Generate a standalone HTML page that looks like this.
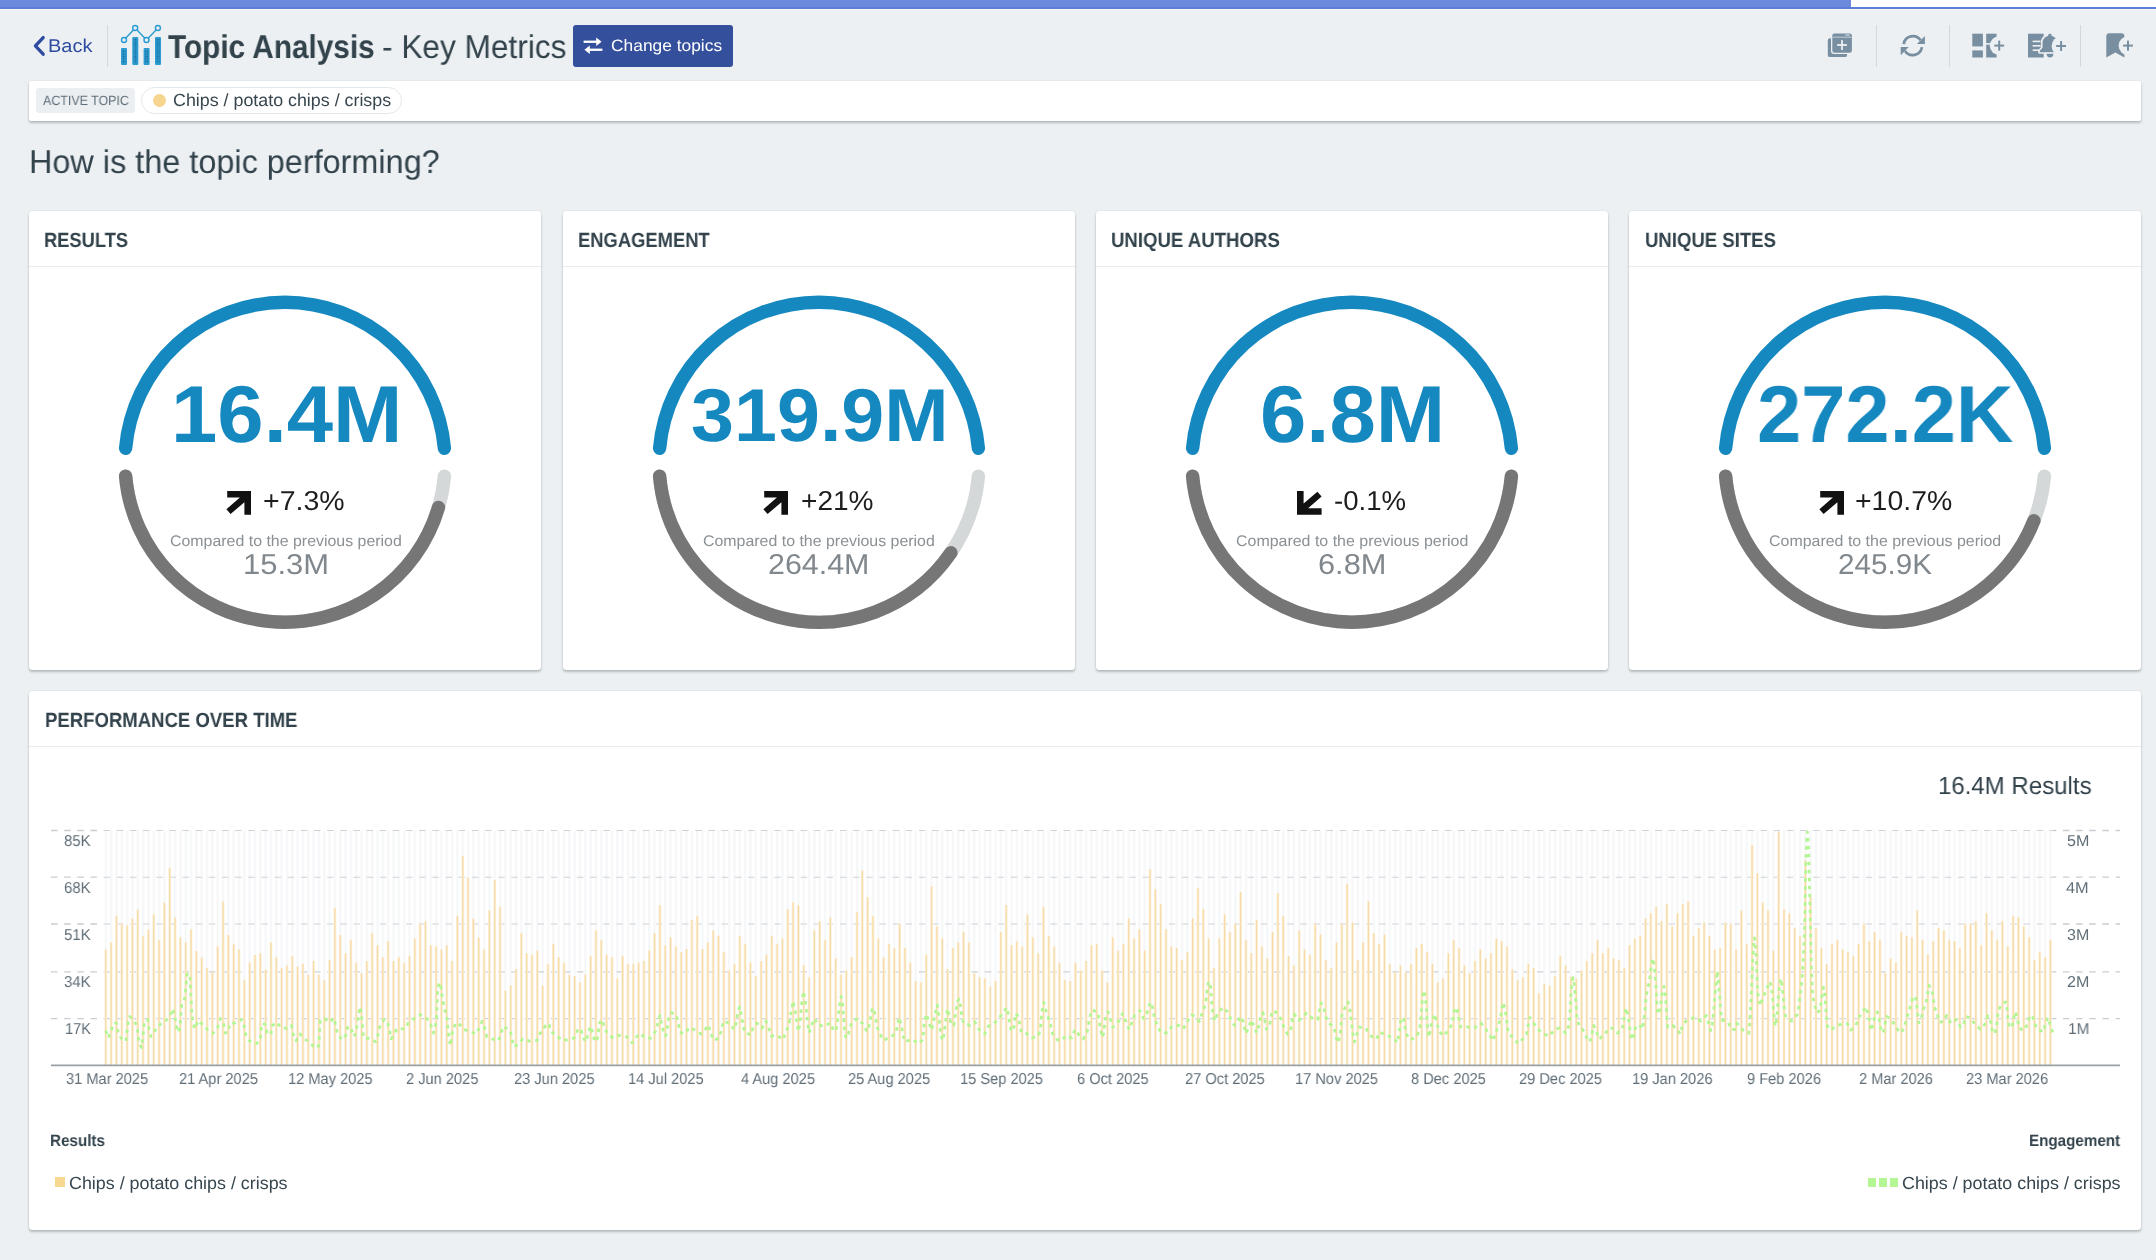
<!DOCTYPE html>
<html><head><meta charset="utf-8"><title>Topic Analysis - Key Metrics</title>
<style>
html,body{margin:0;padding:0}
body{width:2156px;height:1260px;overflow:hidden;background:#ecf0f3;position:relative;font-family:"Liberation Sans", sans-serif}
.abs{position:absolute;display:block}
.t{position:absolute;white-space:nowrap;transform-origin:0 50%;line-height:normal;display:block;will-change:transform;text-rendering:geometricPrecision}
.card{position:absolute;background:#fff;border-radius:3.5px;box-shadow:0 2px 2.5px rgba(40,50,50,.27),0 0 1.5px rgba(40,50,50,.14)}
.hline{position:absolute;height:1.6px;background:#e6ebee}
.vsep{position:absolute;width:1.4px;background:#d3d8dc}
#topbar{position:absolute;left:0;top:0;width:1851px;height:7px;background:#6c8adc}
#topbar-w{position:absolute;left:1851px;top:0;width:305px;height:7px;background:#fff}
#topline{position:absolute;left:0;top:7px;width:2156px;height:2px;background:#5b7eda}
#topline2{position:absolute;left:0;top:9px;width:2156px;height:1px;background:#f4f5f3}
</style></head><body>
<div id="topbar"></div><div id="topbar-w"></div><div id="topline"></div><div id="topline2"></div>
<svg class="abs" style="left:30px;top:34px" width="18" height="24" viewBox="0 0 18 24"><path d="M13.2 3.6 5.4 11.9 13.2 20.2" fill="none" stroke="#2f4b9f" stroke-width="3.3" stroke-linecap="round" stroke-linejoin="round"/></svg>
<span class="t" style="left:48.36px;top:35.31px;font-size:18.54px;font-weight:400;color:#2f4b9f;transform:scaleX(1.0778)">Back</span>
<div class="vsep" style="left:107px;top:25px;height:42px"></div>
<svg class="abs" style="left:118px;top:22px" width="48" height="46" viewBox="118 22 48 46"><defs><pattern id="dots" width="2.4" height="2.4" patternUnits="userSpaceOnUse"><rect width="2.4" height="2.4" fill="#2a9bd0"/><circle cx="1.2" cy="1.2" r="0.85" fill="#1a6a98"/></pattern></defs><rect x="121" y="48" width="6" height="17" rx="1" fill="#2a9bd0"/><rect x="122.4" y="50" width="3.2" height="13" fill="url(#dots)"/><rect x="132.3" y="37" width="6" height="28" rx="1" fill="#2a9bd0"/><rect x="133.70000000000002" y="39" width="3.2" height="24" fill="url(#dots)"/><rect x="143.6" y="48" width="6" height="17" rx="1" fill="#2a9bd0"/><rect x="145.0" y="50" width="3.2" height="13" fill="url(#dots)"/><rect x="155" y="37" width="6" height="28" rx="1" fill="#2a9bd0"/><rect x="156.4" y="39" width="3.2" height="24" fill="url(#dots)"/><path d="M124 40 L135.2 28 L146.5 40 L157.9 28" fill="none" stroke="#2a9bd0" stroke-width="1.4"/><circle cx="124" cy="40" r="2.5" fill="#ecf0f3" stroke="#2a9bd0" stroke-width="1.4"/><circle cx="135.2" cy="28" r="2.5" fill="#ecf0f3" stroke="#2a9bd0" stroke-width="1.4"/><circle cx="146.5" cy="40" r="2.5" fill="#ecf0f3" stroke="#2a9bd0" stroke-width="1.4"/><circle cx="157.9" cy="28" r="2.5" fill="#ecf0f3" stroke="#2a9bd0" stroke-width="1.4"/></svg>
<span class="t" style="left:167.95px;top:27.72px;font-size:32.96px;font-weight:700;color:#33434c;transform:scaleX(0.9030)">Topic Analysis</span>
<span class="t" style="left:381.78px;top:28.42px;font-size:32.96px;font-weight:400;color:#33434c;transform:scaleX(0.9595)">- Key Metrics</span>
<div class="abs" style="left:573px;top:25px;width:160px;height:42px;background:#344f9c;border-radius:3px"></div>
<svg class="abs" style="left:582px;top:37px" width="22" height="18" viewBox="0 0 22 18"><g fill="#fff"><rect x="1.6" y="3.6" width="14" height="2.3"/><path d="M14.2 0.6 19.6 4.75 14.2 8.9z"/><rect x="6.4" y="11.6" width="14" height="2.3"/><path d="M7.8 8.6 2.4 12.75 7.8 16.9z"/></g></svg>
<span class="t" style="left:611.07px;top:36.61px;font-size:16.48px;font-weight:400;color:#fff;transform:scaleX(1.0551)">Change topics</span>
<svg class="abs" style="left:1820px;top:26px" width="320" height="40" viewBox="1820 26 320 40"><rect x="1827.8" y="38.2" width="19.3" height="18.9" rx="2.2" fill="#788fa1"/><rect x="1831" y="32.1" width="22.2" height="21.9" rx="3" fill="#ecf0f3"/><rect x="1832.3" y="33.4" width="19.6" height="19.3" rx="2.2" fill="#788fa1"/><rect x="1832.6" y="36.7" width="19" height="0.9" fill="#ecf0f3" opacity=".75"/><rect x="1845.2" y="34.4" width="4.6" height="1.3" fill="#ecf0f3" opacity=".7"/><rect x="1837.1" y="44.1" width="9.8" height="1.8" fill="#ecf0f3"/><rect x="1841.1" y="40.1" width="1.8" height="9.9" fill="#ecf0f3"/><path d="M1903.7 44.1A9.3 9.3 0 0 1 1920.6 40.2" fill="none" stroke="#788fa1" stroke-width="2.7"/><path d="M1924.9 36V44.1H1916.9z" fill="#788fa1"/><path d="M1921.9 47.1A9.3 9.3 0 0 1 1905 51" fill="none" stroke="#788fa1" stroke-width="2.7"/><path d="M1900.7 55.2V47.1H1908.7z" fill="#788fa1"/><defs><mask id="m3"><rect x="1960" y="20" width="60" height="50" fill="#fff"/><circle cx="1999.2" cy="45.6" r="9.4" fill="#000"/></mask><mask id="m4"><rect x="2020" y="20" width="60" height="50" fill="#fff"/><circle cx="2061" cy="46" r="9.4" fill="#000"/></mask><mask id="m5"><rect x="2100" y="20" width="40" height="50" fill="#fff"/><circle cx="2128" cy="45.6" r="9.4" fill="#000"/></mask></defs><g fill="#788fa1" mask="url(#m3)"><rect x="1972.3" y="33.7" width="10.6" height="12.7"/><rect x="1972.3" y="50.4" width="10.6" height="7.1"/><rect x="1986.2" y="33.7" width="10.4" height="9.4"/><rect x="1986.2" y="44.7" width="10.4" height="12.8"/></g><rect x="1994.3" y="44.6" width="9.8" height="2" fill="#788fa1"/><rect x="1998.2" y="40.6" width="2" height="10" fill="#788fa1"/><g mask="url(#m4)"><rect x="2028" y="33.7" width="15.7" height="23.8" fill="#788fa1"/><rect x="2032.6" y="40.6" width="8" height="1.6" fill="#ecf0f3"/><rect x="2032.6" y="45" width="8" height="1.6" fill="#ecf0f3"/><rect x="2032.6" y="49.4" width="8" height="1.6" fill="#ecf0f3"/><g transform="translate(2049.9 33.7) scale(1.05 .954)"><path d="M0 0c1 0 1.7.7 1.7 1.7v.6c3.2.8 5.3 3.6 5.3 7.1v5.3l2.6 3.3v1.4h-19.2v-1.4l2.6-3.3v-5.3c0-3.5 2.100-6.300 5.300-7.100v-.6c0-1 .7-1.700 1.700-1.700z" fill="#ecf0f3" stroke="#ecf0f3" stroke-width="3.2" stroke-linejoin="round"/><path d="M0 0c1 0 1.7.7 1.7 1.7v.6c3.2.8 5.3 3.6 5.3 7.1v5.3l2.6 3.3v1.4h-19.2v-1.4l2.6-3.3v-5.3c0-3.5 2.100-6.300 5.300-7.100v-.6c0-1 .7-1.700 1.700-1.700z" fill="#788fa1"/></g><path d="M2046.6 53.6h6.8a3.4 3.4 0 0 1-6.8 0z" fill="#ecf0f3" stroke="#ecf0f3" stroke-width="2.4"/><path d="M2046.6 53.8h6.8a3.4 3.6 0 0 1-6.8 0z" fill="#788fa1"/></g><rect x="2056.2" y="45" width="9.8" height="2" fill="#788fa1"/><rect x="2060.1" y="41" width="2" height="10" fill="#788fa1"/><path mask="url(#m5)" d="M2109.3 33.2h12.1a3 3 0 0 1 3 3V57.6l-9.05-5-9.05 5V36.2a3 3 0 0 1 3-3z" fill="#788fa1"/><rect x="2123.1" y="44.6" width="9.8" height="2" fill="#788fa1"/><rect x="2127" y="40.6" width="2" height="10" fill="#788fa1"/></svg>
<div class="vsep" style="left:1876px;top:25px;height:42px"></div>
<div class="vsep" style="left:1949px;top:25px;height:42px"></div>
<div class="vsep" style="left:2080px;top:25px;height:42px"></div>
<div class="card" style="left:29px;top:81px;width:2112px;height:40px;border-radius:2px"></div>
<div class="abs" style="left:36px;top:88px;width:99px;height:25px;background:#eceff2;border-radius:3px"></div>
<span class="t" style="left:42.56px;top:93.06px;font-size:13.39px;font-weight:400;color:#5f6f7a;transform:scaleX(0.9294)">ACTIVE TOPIC</span>
<div class="abs" style="left:141px;top:87px;width:261px;height:27px;box-sizing:border-box;border:1.5px solid #e3e8ec;border-radius:14px;background:#fff"></div>
<div class="abs" style="left:153px;top:94px;width:13px;height:13px;border-radius:50%;background:#f6d58e"></div>
<span class="t" style="left:172.64px;top:90.16px;font-size:17.51px;font-weight:400;color:#36454e;transform:scaleX(1.0194)">Chips / potato chips / crisps</span>
<span class="t" style="left:28.54px;top:143.12px;font-size:32.96px;font-weight:400;color:#33434c;transform:scaleX(0.9835)">How is the topic performing?</span>
<div class="card" style="left:29px;top:211px;width:512px;height:459px"></div>
<div class="hline" style="left:29px;top:265.5px;width:512px"></div>
<span class="t" style="left:44.27px;top:228.91px;font-size:20.6px;font-weight:700;color:#33434c;transform:scaleX(0.8890)">RESULTS</span>
<svg class="abs" style="left:29px;top:270px" width="512" height="390" viewBox="29 270 512 390"><path d="M125.61 448.26A160 160 0 0 1 444.39 448.26" fill="none" stroke="#1588c0" stroke-width="13.4" stroke-linecap="round"/><path d="M444.39 476.14A160 160 0 0 1 125.61 476.14" fill="none" stroke="#d5d8d9" stroke-width="13.4" stroke-linecap="round"/><path d="M438.49 507.38A160 160 0 0 1 125.61 476.14" fill="none" stroke="#767676" stroke-width="13.4" stroke-linecap="round"/></svg>
<span class="t" style="left:170.83px;top:368.66px;font-size:80.55px;font-weight:700;color:#1588c0;transform:scaleX(1.0340)">16.4M</span>
<svg class="abs" style="left:226.2px;top:490.5px" width="25" height="24" viewBox="0 0 25 24"><path d="M1.2 0H25V23.8H18.4V11.2L4.6 23 0.4 18.2 13.9 6.6H1.2z" fill="#111"/></svg>
<span class="t" style="left:262.88px;top:485.05px;font-size:27.4px;font-weight:400;color:#1d1d1d;transform:scaleX(1.0398)">+7.3%</span>
<span class="t" style="left:169.74px;top:532.76px;font-size:15.45px;font-weight:400;color:#8a9094;transform:scaleX(1.0311)">Compared to the previous period</span>
<span class="t" style="left:242.81px;top:548.62px;font-size:28.84px;font-weight:400;color:#81888d;transform:scaleX(1.0740)">15.3M</span>
<div class="card" style="left:563px;top:211px;width:512px;height:459px"></div>
<div class="hline" style="left:563px;top:265.5px;width:512px"></div>
<span class="t" style="left:578.46px;top:228.91px;font-size:20.6px;font-weight:700;color:#33434c;transform:scaleX(0.8920)">ENGAGEMENT</span>
<svg class="abs" style="left:563px;top:270px" width="512" height="390" viewBox="563 270 512 390"><path d="M659.61 448.26A160 160 0 0 1 978.39 448.26" fill="none" stroke="#1588c0" stroke-width="13.4" stroke-linecap="round"/><path d="M978.39 476.14A160 160 0 0 1 659.61 476.14" fill="none" stroke="#d5d8d9" stroke-width="13.4" stroke-linecap="round"/><path d="M950.87 552.81A160 160 0 0 1 659.61 476.14" fill="none" stroke="#767676" stroke-width="13.4" stroke-linecap="round"/></svg>
<span class="t" style="left:690.52px;top:372.08px;font-size:74.78px;font-weight:700;color:#1588c0;transform:scaleX(1.0332)">319.9M</span>
<svg class="abs" style="left:763.4px;top:490.5px" width="25" height="24" viewBox="0 0 25 24"><path d="M1.2 0H25V23.8H18.4V11.2L4.6 23 0.4 18.2 13.9 6.6H1.2z" fill="#111"/></svg>
<span class="t" style="left:800.51px;top:485.05px;font-size:27.4px;font-weight:400;color:#1d1d1d;transform:scaleX(1.0240)">+21%</span>
<span class="t" style="left:702.54px;top:532.76px;font-size:15.45px;font-weight:400;color:#8a9094;transform:scaleX(1.0311)">Compared to the previous period</span>
<span class="t" style="left:767.96px;top:548.62px;font-size:28.84px;font-weight:400;color:#81888d;transform:scaleX(1.0549)">264.4M</span>
<div class="card" style="left:1096px;top:211px;width:512px;height:459px"></div>
<div class="hline" style="left:1096px;top:265.5px;width:512px"></div>
<span class="t" style="left:1111.37px;top:228.91px;font-size:20.6px;font-weight:700;color:#33434c;transform:scaleX(0.9032)">UNIQUE AUTHORS</span>
<svg class="abs" style="left:1096px;top:270px" width="512" height="390" viewBox="1096 270 512 390"><path d="M1192.61 448.26A160 160 0 0 1 1511.39 448.26" fill="none" stroke="#1588c0" stroke-width="13.4" stroke-linecap="round"/><path d="M1511.39 476.14A160 160 0 0 1 1192.61 476.14" fill="none" stroke="#d5d8d9" stroke-width="13.4" stroke-linecap="round"/><path d="M1511.39 476.14A160 160 0 0 1 1192.61 476.14" fill="none" stroke="#767676" stroke-width="13.4" stroke-linecap="round"/></svg>
<span class="t" style="left:1259.90px;top:368.66px;font-size:80.55px;font-weight:700;color:#1588c0;transform:scaleX(1.0346)">6.8M</span>
<svg class="abs" style="left:1296.8px;top:490.5px" width="25" height="24" viewBox="0 0 25 24"><path d="M0 0H6.6V12.6L20.4 0.8 24.6 5.6 11.1 17.2H24.6V23.8H0z" fill="#111"/></svg>
<span class="t" style="left:1333.65px;top:485.05px;font-size:27.4px;font-weight:400;color:#1d1d1d;transform:scaleX(1.0082)">-0.1%</span>
<span class="t" style="left:1235.94px;top:532.76px;font-size:15.45px;font-weight:400;color:#8a9094;transform:scaleX(1.0334)">Compared to the previous period</span>
<span class="t" style="left:1317.99px;top:548.62px;font-size:28.84px;font-weight:400;color:#81888d;transform:scaleX(1.0677)">6.8M</span>
<div class="card" style="left:1629px;top:211px;width:512px;height:459px"></div>
<div class="hline" style="left:1629px;top:265.5px;width:512px"></div>
<span class="t" style="left:1644.77px;top:228.91px;font-size:20.6px;font-weight:700;color:#33434c;transform:scaleX(0.9013)">UNIQUE SITES</span>
<svg class="abs" style="left:1629px;top:270px" width="512" height="390" viewBox="1629 270 512 390"><path d="M1725.61 448.26A160 160 0 0 1 2044.39 448.26" fill="none" stroke="#1588c0" stroke-width="13.4" stroke-linecap="round"/><path d="M2044.39 476.14A160 160 0 0 1 1725.61 476.14" fill="none" stroke="#d5d8d9" stroke-width="13.4" stroke-linecap="round"/><path d="M2033.94 520.65A160 160 0 0 1 1725.61 476.14" fill="none" stroke="#767676" stroke-width="13.4" stroke-linecap="round"/></svg>
<span class="t" style="left:1757.44px;top:368.66px;font-size:80.55px;font-weight:700;color:#1588c0;transform:scaleX(0.9870)">272.2K</span>
<svg class="abs" style="left:1818.7px;top:490.5px" width="25" height="24" viewBox="0 0 25 24"><path d="M1.2 0H25V23.8H18.4V11.2L4.6 23 0.4 18.2 13.9 6.6H1.2z" fill="#111"/></svg>
<span class="t" style="left:1854.99px;top:485.05px;font-size:27.4px;font-weight:400;color:#1d1d1d;transform:scaleX(1.0382)">+10.7%</span>
<span class="t" style="left:1769.44px;top:532.76px;font-size:15.45px;font-weight:400;color:#8a9094;transform:scaleX(1.0329)">Compared to the previous period</span>
<span class="t" style="left:1838.40px;top:548.62px;font-size:28.84px;font-weight:400;color:#81888d;transform:scaleX(1.0286)">245.9K</span>
<div class="card" style="left:29px;top:691px;width:2112px;height:539px"></div>
<div class="hline" style="left:29px;top:745.5px;width:2112px"></div>
<span class="t" style="left:44.65px;top:708.71px;font-size:20.6px;font-weight:700;color:#33434c;transform:scaleX(0.9006)">PERFORMANCE OVER TIME</span>
<svg class="abs" style="left:40px;top:820px" width="2090" height="250" viewBox="40 820 2090 250"><defs><pattern id="vb" x="104.650" y="0" width="5.3277" height="10" patternUnits="userSpaceOnUse"><rect x="0" y="0" width="2.30" height="10" fill="#f6f7f9"/></pattern></defs><rect x="104.65" y="830.5" width="1946.91" height="234.9" fill="url(#vb)"/><defs><clipPath id="cin"><rect x="103.1" y="820" width="1949.9" height="250"/></clipPath><clipPath id="cout"><rect x="40" y="820" width="63.1" height="250"/><rect x="2053.1" y="820" width="100" height="250"/></clipPath></defs><path clip-path="url(#cin)" d="M51 830.5H2120M51 877.2H2120M51 924.0H2120M51 971.8H2120M51 1018.6H2120" stroke="#cfd2d6" stroke-width="1.15" stroke-dasharray="6.5 6.65" fill="none"/><path clip-path="url(#cout)" d="M51 830.5H2120M51 877.2H2120M51 924.0H2120M51 971.8H2120M51 1018.6H2120" stroke="#c9cdd1" stroke-width="1.3" stroke-dasharray="6.5 6.65" fill="none"/><path d="M105.80 1065.4V949.4M111.13 1065.4V942.6M116.46 1065.4V916.0M121.78 1065.4V923.8M127.11 1065.4V925.5M132.44 1065.4V918.5M137.77 1065.4V909.4M143.09 1065.4V936.2M148.42 1065.4V929.4M153.75 1065.4V914.4M159.08 1065.4V940.1M164.40 1065.4V902.8M169.73 1065.4V867.8M175.06 1065.4V917.4M180.39 1065.4V937.4M185.72 1065.4V942.6M191.04 1065.4V929.4M196.37 1065.4V951.0M201.70 1065.4V957.6M207.03 1065.4V967.9M212.35 1065.4V972.2M217.68 1065.4V946.5M223.01 1065.4V901.2M228.34 1065.4V934.9M233.66 1065.4V944.2M238.99 1065.4V949.4M244.32 1065.4V980.0M249.65 1065.4V962.5M254.98 1065.4V954.9M260.30 1065.4V953.3M265.63 1065.4V969.5M270.96 1065.4V942.6M276.29 1065.4V957.2M281.61 1065.4V968.3M286.94 1065.4V965.4M292.27 1065.4V955.9M297.60 1065.4V966.5M302.92 1065.4V963.8M308.25 1065.4V974.7M313.58 1065.4V961.1M318.91 1065.4V974.7M324.24 1065.4V980.0M329.56 1065.4V960.1M334.89 1065.4V908.0M340.22 1065.4V934.9M345.55 1065.4V953.3M350.87 1065.4V939.7M356.20 1065.4V962.7M361.53 1065.4V973.2M366.86 1065.4V961.1M372.19 1065.4V933.3M377.51 1065.4V945.2M382.84 1065.4V957.2M388.17 1065.4V941.3M393.50 1065.4V961.1M398.82 1065.4V957.2M404.15 1065.4V962.7M409.48 1065.4V955.9M414.81 1065.4V938.5M420.13 1065.4V923.8M425.46 1065.4V921.2M430.79 1065.4V945.2M436.12 1065.4V946.5M441.45 1065.4V949.4M446.77 1065.4V945.2M452.10 1065.4V961.1M457.43 1065.4V916.0M462.76 1065.4V855.7M468.08 1065.4V877.5M473.41 1065.4V918.7M478.74 1065.4V937.4M484.07 1065.4V949.4M489.39 1065.4V910.5M494.72 1065.4V880.0M500.05 1065.4V906.7M505.38 1065.4V990.7M510.71 1065.4V985.4M516.03 1065.4V968.9M521.36 1065.4V933.3M526.69 1065.4V953.3M532.02 1065.4V954.7M537.34 1065.4V950.8M542.67 1065.4V985.4M548.00 1065.4V964.0M553.33 1065.4V944.0M558.65 1065.4V957.2M563.98 1065.4V962.7M569.31 1065.4V974.7M574.64 1065.4V975.9M579.97 1065.4V982.5M585.29 1065.4V974.7M590.62 1065.4V955.9M595.95 1065.4V930.6M601.28 1065.4V940.1M606.60 1065.4V954.7M611.93 1065.4V957.2M617.26 1065.4V978.6M622.59 1065.4V956.2M627.91 1065.4V964.0M633.24 1065.4V964.0M638.57 1065.4V962.7M643.90 1065.4V961.1M649.23 1065.4V950.4M654.55 1065.4V933.3M659.88 1065.4V905.3M665.21 1065.4V945.2M670.54 1065.4V937.2M675.86 1065.4V946.5M681.19 1065.4V952.0M686.52 1065.4V949.0M691.85 1065.4V919.9M697.17 1065.4V916.0M702.50 1065.4V949.0M707.83 1065.4V942.6M713.16 1065.4V930.6M718.49 1065.4V935.8M723.81 1065.4V952.0M729.14 1065.4V970.4M734.47 1065.4V964.0M739.80 1065.4V935.8M745.12 1065.4V944.0M750.45 1065.4V962.7M755.78 1065.4V975.9M761.11 1065.4V961.1M766.43 1065.4V954.7M771.76 1065.4V935.8M777.09 1065.4V944.0M782.42 1065.4V938.5M787.75 1065.4V909.2M793.07 1065.4V902.6M798.40 1065.4V905.3M803.73 1065.4V965.0M809.06 1065.4V977.2M814.38 1065.4V930.6M819.71 1065.4V921.2M825.04 1065.4V940.1M830.37 1065.4V917.4M835.69 1065.4V958.6M841.02 1065.4V974.7M846.35 1065.4V970.4M851.68 1065.4V957.2M857.01 1065.4V911.9M862.33 1065.4V870.5M867.66 1065.4V897.3M872.99 1065.4V916.0M878.32 1065.4V938.5M883.64 1065.4V957.2M888.97 1065.4V944.0M894.30 1065.4V947.9M899.63 1065.4V923.8M904.95 1065.4V947.9M910.28 1065.4V962.7M915.61 1065.4V981.1M920.94 1065.4V982.5M926.27 1065.4V954.7M931.59 1065.4V886.4M936.92 1065.4V926.5M942.25 1065.4V938.5M947.58 1065.4V969.3M952.90 1065.4V947.9M958.23 1065.4V942.6M963.56 1065.4V931.9M968.89 1065.4V942.6M974.22 1065.4V973.2M979.54 1065.4V977.2M984.87 1065.4V978.6M990.20 1065.4V986.4M995.53 1065.4V981.1M1000.85 1065.4V931.9M1006.18 1065.4V905.1M1011.51 1065.4V945.2M1016.84 1065.4V941.3M1022.16 1065.4V946.5M1027.49 1065.4V914.4M1032.82 1065.4V937.2M1038.15 1065.4V953.3M1043.48 1065.4V906.7M1048.80 1065.4V935.8M1054.13 1065.4V946.5M1059.46 1065.4V962.7M1064.79 1065.4V980.0M1070.11 1065.4V981.1M1075.44 1065.4V962.7M1080.77 1065.4V970.4M1086.10 1065.4V961.1M1091.42 1065.4V945.2M1096.75 1065.4V944.0M1102.08 1065.4V970.4M1107.41 1065.4V982.5M1112.74 1065.4V937.2M1118.06 1065.4V950.8M1123.39 1065.4V944.0M1128.72 1065.4V918.5M1134.05 1065.4V938.5M1139.37 1065.4V929.2M1144.70 1065.4V950.4M1150.03 1065.4V869.3M1155.36 1065.4V889.2M1160.68 1065.4V903.9M1166.01 1065.4V929.2M1171.34 1065.4V946.5M1176.67 1065.4V947.9M1182.00 1065.4V960.1M1187.32 1065.4V952.0M1192.65 1065.4V918.5M1197.98 1065.4V887.8M1203.31 1065.4V909.2M1208.63 1065.4V938.5M1213.96 1065.4V967.9M1219.29 1065.4V938.5M1224.62 1065.4V914.4M1229.94 1065.4V931.9M1235.27 1065.4V923.8M1240.60 1065.4V891.9M1245.93 1065.4V940.1M1251.26 1065.4V953.3M1256.58 1065.4V919.9M1261.91 1065.4V946.5M1267.24 1065.4V958.6M1272.57 1065.4V931.9M1277.89 1065.4V893.1M1283.22 1065.4V916.0M1288.55 1065.4V955.9M1293.88 1065.4V965.4M1299.20 1065.4V930.6M1304.53 1065.4V949.4M1309.86 1065.4V954.7M1315.19 1065.4V923.8M1320.52 1065.4V934.5M1325.84 1065.4V960.1M1331.17 1065.4V967.9M1336.50 1065.4V942.6M1341.83 1065.4V923.8M1347.15 1065.4V883.9M1352.48 1065.4V922.6M1357.81 1065.4V960.1M1363.14 1065.4V942.6M1368.46 1065.4V901.2M1373.79 1065.4V933.3M1379.12 1065.4V944.0M1384.45 1065.4V934.5M1389.78 1065.4V964.0M1395.10 1065.4V972.2M1400.43 1065.4V965.4M1405.76 1065.4V972.2M1411.09 1065.4V964.0M1416.41 1065.4V947.9M1421.74 1065.4V944.0M1427.07 1065.4V952.0M1432.40 1065.4V964.0M1437.72 1065.4V982.5M1443.05 1065.4V978.6M1448.38 1065.4V953.3M1453.71 1065.4V940.1M1459.04 1065.4V947.9M1464.36 1065.4V965.4M1469.69 1065.4V973.2M1475.02 1065.4V961.1M1480.35 1065.4V949.4M1485.67 1065.4V958.6M1491.00 1065.4V953.3M1496.33 1065.4V938.5M1501.66 1065.4V941.3M1506.99 1065.4V946.5M1512.31 1065.4V969.3M1517.64 1065.4V980.0M1522.97 1065.4V977.2M1528.30 1065.4V964.0M1533.62 1065.4V967.9M1538.95 1065.4V993.2M1544.28 1065.4V983.9M1549.61 1065.4V985.4M1554.93 1065.4V975.9M1560.26 1065.4V956.2M1565.59 1065.4V965.4M1570.92 1065.4V976.7M1576.25 1065.4V978.6M1581.57 1065.4V970.4M1586.90 1065.4V961.1M1592.23 1065.4V953.3M1597.56 1065.4V940.1M1602.88 1065.4V953.3M1608.21 1065.4V947.9M1613.54 1065.4V958.6M1618.87 1065.4V960.1M1624.19 1065.4V967.9M1629.52 1065.4V945.2M1634.85 1065.4V938.5M1640.18 1065.4V935.8M1645.51 1065.4V918.5M1650.83 1065.4V913.3M1656.16 1065.4V906.7M1661.49 1065.4V921.2M1666.82 1065.4V903.9M1672.14 1065.4V926.5M1677.47 1065.4V913.3M1682.80 1065.4V903.9M1688.13 1065.4V901.2M1693.45 1065.4V935.8M1698.78 1065.4V927.9M1704.11 1065.4V922.6M1709.44 1065.4V935.8M1714.77 1065.4V949.4M1720.09 1065.4V947.9M1725.42 1065.4V922.6M1730.75 1065.4V923.8M1736.08 1065.4V949.4M1741.40 1065.4V910.5M1746.73 1065.4V944.0M1752.06 1065.4V845.0M1757.39 1065.4V873.2M1762.71 1065.4V902.6M1768.04 1065.4V910.5M1773.37 1065.4V950.8M1778.70 1065.4V831.8M1784.03 1065.4V909.2M1789.35 1065.4V913.3M1794.68 1065.4V927.9M1800.01 1065.4V935.8M1805.34 1065.4V860.0M1810.66 1065.4V896.9M1815.99 1065.4V927.9M1821.32 1065.4V947.9M1826.65 1065.4V964.0M1831.97 1065.4V944.0M1837.30 1065.4V940.1M1842.63 1065.4V949.4M1847.96 1065.4V952.0M1853.29 1065.4V955.9M1858.61 1065.4V944.0M1863.94 1065.4V923.8M1869.27 1065.4V941.3M1874.60 1065.4V931.9M1879.92 1065.4V939.7M1885.25 1065.4V973.2M1890.58 1065.4V958.6M1895.91 1065.4V962.7M1901.23 1065.4V931.9M1906.56 1065.4V935.8M1911.89 1065.4V937.2M1917.22 1065.4V910.5M1922.55 1065.4V939.7M1927.87 1065.4V954.7M1933.20 1065.4V941.3M1938.53 1065.4V927.9M1943.86 1065.4V930.6M1949.18 1065.4V939.7M1954.51 1065.4V941.3M1959.84 1065.4V947.9M1965.17 1065.4V923.8M1970.49 1065.4V923.8M1975.82 1065.4V921.2M1981.15 1065.4V945.2M1986.48 1065.4V913.3M1991.81 1065.4V930.6M1997.13 1065.4V939.7M2002.46 1065.4V921.2M2007.79 1065.4V946.5M2013.12 1065.4V916.0M2018.44 1065.4V917.4M2023.77 1065.4V926.5M2029.10 1065.4V937.2M2034.43 1065.4V960.1M2039.76 1065.4V952.0M2045.08 1065.4V957.2M2050.41 1065.4V939.7" stroke="#fbf0dc" stroke-width="2.7" fill="none"/><path d="M105.80 1065.4V949.4M111.13 1065.4V942.6M116.46 1065.4V916.0M121.78 1065.4V923.8M127.11 1065.4V925.5M132.44 1065.4V918.5M137.77 1065.4V909.4M143.09 1065.4V936.2M148.42 1065.4V929.4M153.75 1065.4V914.4M159.08 1065.4V940.1M164.40 1065.4V902.8M169.73 1065.4V867.8M175.06 1065.4V917.4M180.39 1065.4V937.4M185.72 1065.4V942.6M191.04 1065.4V929.4M196.37 1065.4V951.0M201.70 1065.4V957.6M207.03 1065.4V967.9M212.35 1065.4V972.2M217.68 1065.4V946.5M223.01 1065.4V901.2M228.34 1065.4V934.9M233.66 1065.4V944.2M238.99 1065.4V949.4M244.32 1065.4V980.0M249.65 1065.4V962.5M254.98 1065.4V954.9M260.30 1065.4V953.3M265.63 1065.4V969.5M270.96 1065.4V942.6M276.29 1065.4V957.2M281.61 1065.4V968.3M286.94 1065.4V965.4M292.27 1065.4V955.9M297.60 1065.4V966.5M302.92 1065.4V963.8M308.25 1065.4V974.7M313.58 1065.4V961.1M318.91 1065.4V974.7M324.24 1065.4V980.0M329.56 1065.4V960.1M334.89 1065.4V908.0M340.22 1065.4V934.9M345.55 1065.4V953.3M350.87 1065.4V939.7M356.20 1065.4V962.7M361.53 1065.4V973.2M366.86 1065.4V961.1M372.19 1065.4V933.3M377.51 1065.4V945.2M382.84 1065.4V957.2M388.17 1065.4V941.3M393.50 1065.4V961.1M398.82 1065.4V957.2M404.15 1065.4V962.7M409.48 1065.4V955.9M414.81 1065.4V938.5M420.13 1065.4V923.8M425.46 1065.4V921.2M430.79 1065.4V945.2M436.12 1065.4V946.5M441.45 1065.4V949.4M446.77 1065.4V945.2M452.10 1065.4V961.1M457.43 1065.4V916.0M462.76 1065.4V855.7M468.08 1065.4V877.5M473.41 1065.4V918.7M478.74 1065.4V937.4M484.07 1065.4V949.4M489.39 1065.4V910.5M494.72 1065.4V880.0M500.05 1065.4V906.7M505.38 1065.4V990.7M510.71 1065.4V985.4M516.03 1065.4V968.9M521.36 1065.4V933.3M526.69 1065.4V953.3M532.02 1065.4V954.7M537.34 1065.4V950.8M542.67 1065.4V985.4M548.00 1065.4V964.0M553.33 1065.4V944.0M558.65 1065.4V957.2M563.98 1065.4V962.7M569.31 1065.4V974.7M574.64 1065.4V975.9M579.97 1065.4V982.5M585.29 1065.4V974.7M590.62 1065.4V955.9M595.95 1065.4V930.6M601.28 1065.4V940.1M606.60 1065.4V954.7M611.93 1065.4V957.2M617.26 1065.4V978.6M622.59 1065.4V956.2M627.91 1065.4V964.0M633.24 1065.4V964.0M638.57 1065.4V962.7M643.90 1065.4V961.1M649.23 1065.4V950.4M654.55 1065.4V933.3M659.88 1065.4V905.3M665.21 1065.4V945.2M670.54 1065.4V937.2M675.86 1065.4V946.5M681.19 1065.4V952.0M686.52 1065.4V949.0M691.85 1065.4V919.9M697.17 1065.4V916.0M702.50 1065.4V949.0M707.83 1065.4V942.6M713.16 1065.4V930.6M718.49 1065.4V935.8M723.81 1065.4V952.0M729.14 1065.4V970.4M734.47 1065.4V964.0M739.80 1065.4V935.8M745.12 1065.4V944.0M750.45 1065.4V962.7M755.78 1065.4V975.9M761.11 1065.4V961.1M766.43 1065.4V954.7M771.76 1065.4V935.8M777.09 1065.4V944.0M782.42 1065.4V938.5M787.75 1065.4V909.2M793.07 1065.4V902.6M798.40 1065.4V905.3M803.73 1065.4V965.0M809.06 1065.4V977.2M814.38 1065.4V930.6M819.71 1065.4V921.2M825.04 1065.4V940.1M830.37 1065.4V917.4M835.69 1065.4V958.6M841.02 1065.4V974.7M846.35 1065.4V970.4M851.68 1065.4V957.2M857.01 1065.4V911.9M862.33 1065.4V870.5M867.66 1065.4V897.3M872.99 1065.4V916.0M878.32 1065.4V938.5M883.64 1065.4V957.2M888.97 1065.4V944.0M894.30 1065.4V947.9M899.63 1065.4V923.8M904.95 1065.4V947.9M910.28 1065.4V962.7M915.61 1065.4V981.1M920.94 1065.4V982.5M926.27 1065.4V954.7M931.59 1065.4V886.4M936.92 1065.4V926.5M942.25 1065.4V938.5M947.58 1065.4V969.3M952.90 1065.4V947.9M958.23 1065.4V942.6M963.56 1065.4V931.9M968.89 1065.4V942.6M974.22 1065.4V973.2M979.54 1065.4V977.2M984.87 1065.4V978.6M990.20 1065.4V986.4M995.53 1065.4V981.1M1000.85 1065.4V931.9M1006.18 1065.4V905.1M1011.51 1065.4V945.2M1016.84 1065.4V941.3M1022.16 1065.4V946.5M1027.49 1065.4V914.4M1032.82 1065.4V937.2M1038.15 1065.4V953.3M1043.48 1065.4V906.7M1048.80 1065.4V935.8M1054.13 1065.4V946.5M1059.46 1065.4V962.7M1064.79 1065.4V980.0M1070.11 1065.4V981.1M1075.44 1065.4V962.7M1080.77 1065.4V970.4M1086.10 1065.4V961.1M1091.42 1065.4V945.2M1096.75 1065.4V944.0M1102.08 1065.4V970.4M1107.41 1065.4V982.5M1112.74 1065.4V937.2M1118.06 1065.4V950.8M1123.39 1065.4V944.0M1128.72 1065.4V918.5M1134.05 1065.4V938.5M1139.37 1065.4V929.2M1144.70 1065.4V950.4M1150.03 1065.4V869.3M1155.36 1065.4V889.2M1160.68 1065.4V903.9M1166.01 1065.4V929.2M1171.34 1065.4V946.5M1176.67 1065.4V947.9M1182.00 1065.4V960.1M1187.32 1065.4V952.0M1192.65 1065.4V918.5M1197.98 1065.4V887.8M1203.31 1065.4V909.2M1208.63 1065.4V938.5M1213.96 1065.4V967.9M1219.29 1065.4V938.5M1224.62 1065.4V914.4M1229.94 1065.4V931.9M1235.27 1065.4V923.8M1240.60 1065.4V891.9M1245.93 1065.4V940.1M1251.26 1065.4V953.3M1256.58 1065.4V919.9M1261.91 1065.4V946.5M1267.24 1065.4V958.6M1272.57 1065.4V931.9M1277.89 1065.4V893.1M1283.22 1065.4V916.0M1288.55 1065.4V955.9M1293.88 1065.4V965.4M1299.20 1065.4V930.6M1304.53 1065.4V949.4M1309.86 1065.4V954.7M1315.19 1065.4V923.8M1320.52 1065.4V934.5M1325.84 1065.4V960.1M1331.17 1065.4V967.9M1336.50 1065.4V942.6M1341.83 1065.4V923.8M1347.15 1065.4V883.9M1352.48 1065.4V922.6M1357.81 1065.4V960.1M1363.14 1065.4V942.6M1368.46 1065.4V901.2M1373.79 1065.4V933.3M1379.12 1065.4V944.0M1384.45 1065.4V934.5M1389.78 1065.4V964.0M1395.10 1065.4V972.2M1400.43 1065.4V965.4M1405.76 1065.4V972.2M1411.09 1065.4V964.0M1416.41 1065.4V947.9M1421.74 1065.4V944.0M1427.07 1065.4V952.0M1432.40 1065.4V964.0M1437.72 1065.4V982.5M1443.05 1065.4V978.6M1448.38 1065.4V953.3M1453.71 1065.4V940.1M1459.04 1065.4V947.9M1464.36 1065.4V965.4M1469.69 1065.4V973.2M1475.02 1065.4V961.1M1480.35 1065.4V949.4M1485.67 1065.4V958.6M1491.00 1065.4V953.3M1496.33 1065.4V938.5M1501.66 1065.4V941.3M1506.99 1065.4V946.5M1512.31 1065.4V969.3M1517.64 1065.4V980.0M1522.97 1065.4V977.2M1528.30 1065.4V964.0M1533.62 1065.4V967.9M1538.95 1065.4V993.2M1544.28 1065.4V983.9M1549.61 1065.4V985.4M1554.93 1065.4V975.9M1560.26 1065.4V956.2M1565.59 1065.4V965.4M1570.92 1065.4V976.7M1576.25 1065.4V978.6M1581.57 1065.4V970.4M1586.90 1065.4V961.1M1592.23 1065.4V953.3M1597.56 1065.4V940.1M1602.88 1065.4V953.3M1608.21 1065.4V947.9M1613.54 1065.4V958.6M1618.87 1065.4V960.1M1624.19 1065.4V967.9M1629.52 1065.4V945.2M1634.85 1065.4V938.5M1640.18 1065.4V935.8M1645.51 1065.4V918.5M1650.83 1065.4V913.3M1656.16 1065.4V906.7M1661.49 1065.4V921.2M1666.82 1065.4V903.9M1672.14 1065.4V926.5M1677.47 1065.4V913.3M1682.80 1065.4V903.9M1688.13 1065.4V901.2M1693.45 1065.4V935.8M1698.78 1065.4V927.9M1704.11 1065.4V922.6M1709.44 1065.4V935.8M1714.77 1065.4V949.4M1720.09 1065.4V947.9M1725.42 1065.4V922.6M1730.75 1065.4V923.8M1736.08 1065.4V949.4M1741.40 1065.4V910.5M1746.73 1065.4V944.0M1752.06 1065.4V845.0M1757.39 1065.4V873.2M1762.71 1065.4V902.6M1768.04 1065.4V910.5M1773.37 1065.4V950.8M1778.70 1065.4V831.8M1784.03 1065.4V909.2M1789.35 1065.4V913.3M1794.68 1065.4V927.9M1800.01 1065.4V935.8M1805.34 1065.4V860.0M1810.66 1065.4V896.9M1815.99 1065.4V927.9M1821.32 1065.4V947.9M1826.65 1065.4V964.0M1831.97 1065.4V944.0M1837.30 1065.4V940.1M1842.63 1065.4V949.4M1847.96 1065.4V952.0M1853.29 1065.4V955.9M1858.61 1065.4V944.0M1863.94 1065.4V923.8M1869.27 1065.4V941.3M1874.60 1065.4V931.9M1879.92 1065.4V939.7M1885.25 1065.4V973.2M1890.58 1065.4V958.6M1895.91 1065.4V962.7M1901.23 1065.4V931.9M1906.56 1065.4V935.8M1911.89 1065.4V937.2M1917.22 1065.4V910.5M1922.55 1065.4V939.7M1927.87 1065.4V954.7M1933.20 1065.4V941.3M1938.53 1065.4V927.9M1943.86 1065.4V930.6M1949.18 1065.4V939.7M1954.51 1065.4V941.3M1959.84 1065.4V947.9M1965.17 1065.4V923.8M1970.49 1065.4V923.8M1975.82 1065.4V921.2M1981.15 1065.4V945.2M1986.48 1065.4V913.3M1991.81 1065.4V930.6M1997.13 1065.4V939.7M2002.46 1065.4V921.2M2007.79 1065.4V946.5M2013.12 1065.4V916.0M2018.44 1065.4V917.4M2023.77 1065.4V926.5M2029.10 1065.4V937.2M2034.43 1065.4V960.1M2039.76 1065.4V952.0M2045.08 1065.4V957.2M2050.41 1065.4V939.7" stroke="#f7dba6" stroke-width="1.25" fill="none"/><polyline points="105.8,1030.7 108.4,1037.9 114.0,1022.9 116.5,1023.3 117.9,1031.1 120.8,1037.9 125.9,1041.2 127.8,1024.3 129.7,1016.5 134.0,1020.4 137.3,1027.2 138.9,1042.8 141.6,1047.6 144.3,1023.3 147.8,1019.4 149.0,1028.8 150.9,1036.5 153.5,1033.4 157.7,1025.7 164.2,1022.3 169.6,1016.5 172.7,1008.7 174.9,1016.5 177.4,1032.1 179.7,1029.2 181.7,1004.8 184.8,998.0 187.1,974.3 189.8,973.7 191.4,1005.8 192.9,1022.9 194.9,1028.8 198.2,1020.4 202.1,1024.3 207.9,1030.1 212.8,1033.4 217.8,1027.2 220.5,1018.5 223.5,1023.7 225.4,1033.0 228.3,1032.1 229.9,1023.3 235.1,1022.9 241.9,1019.4 244.3,1026.2 245.8,1035.0 249.3,1040.8 256.5,1043.7 260.4,1039.8 261.8,1023.7 265.3,1024.3 267.2,1033.0 270.7,1035.0 272.7,1025.3 276.5,1022.3 281.8,1028.2 287.0,1028.2 291.5,1025.3 293.1,1034.0 296.0,1040.8 300.3,1034.0 304.2,1038.9 310.0,1042.4 314.8,1048.2 318.7,1045.7 320.3,1020.4 324.6,1018.5 329.4,1022.3 333.9,1017.9 335.7,1026.2 337.6,1034.0 342.1,1039.8 346.0,1035.0 347.9,1026.2 351.2,1029.2 354.3,1036.5 356.6,1029.2 358.6,1014.6 360.1,1006.8 361.5,1014.6 363.5,1037.9 369.3,1038.5 375.7,1041.8 378.0,1035.0 380.0,1025.3 384.3,1019.4 387.8,1022.9 389.7,1031.1 391.3,1038.9 397.5,1028.2 404.3,1029.2 408.2,1023.3 415.0,1017.9 419.8,1014.6 427.0,1018.5 430.5,1024.3 433.5,1033.0 436.4,1021.4 437.9,986.4 440.3,982.5 442.6,1000.0 447.1,1019.4 449.0,1038.9 450.6,1045.7 452.3,1031.1 455.8,1022.9 458.7,1023.3 463.2,1029.2 468.4,1031.1 476.2,1034.0 479.1,1028.2 482.1,1021.4 485.0,1029.2 486.9,1036.9 491.8,1038.9 498.6,1040.8 503.4,1026.2 510.3,1031.1 513.8,1046.7 516.0,1045.7 522.8,1038.9 529.6,1041.2 537.0,1040.4 540.3,1033.0 545.2,1026.2 548.7,1023.3 551.0,1031.5 556.4,1035.4 562.3,1040.8 568.5,1039.5 574.3,1037.9 578.2,1028.8 581.1,1029.5 583.1,1037.9 586.0,1041.8 587.9,1034.0 590.3,1026.2 592.8,1033.0 594.7,1041.8 597.7,1037.9 598.6,1030.1 600.0,1022.3 602.5,1019.8 604.5,1028.8 608.9,1035.0 613.2,1037.9 619.0,1035.4 626.8,1036.9 632.1,1042.8 635.6,1037.9 639.9,1033.4 646.3,1038.5 651.1,1037.9 655.6,1031.1 657.9,1023.3 659.9,1015.5 661.4,1023.3 663.4,1031.1 665.7,1036.0 667.3,1027.2 668.6,1018.5 671.2,1012.6 676.4,1015.2 678.4,1023.3 679.9,1032.1 684.2,1034.0 690.0,1027.2 694.9,1030.1 701.1,1034.0 705.6,1028.8 708.5,1024.9 711.0,1034.0 714.3,1040.4 719.2,1037.9 721.5,1029.2 723.7,1021.0 729.9,1023.7 734.2,1029.5 736.3,1022.3 737.7,1013.6 739.6,1006.8 741.5,1016.5 743.1,1024.3 744.5,1032.1 750.7,1035.0 753.2,1027.2 757.1,1023.3 762.0,1028.2 765.8,1021.0 768.8,1028.2 771.1,1036.0 777.5,1035.4 782.8,1039.8 785.9,1032.1 788.8,1025.3 790.1,1017.5 791.7,1008.7 793.1,1001.0 794.4,1007.8 796.0,1014.6 797.0,1023.3 798.3,1031.5 799.9,1023.3 801.2,1007.8 803.4,991.2 805.3,1001.0 806.3,1008.7 807.1,1017.5 808.0,1025.3 809.2,1032.7 811.5,1025.3 814.5,1018.5 818.0,1025.3 824.2,1026.2 830.6,1022.9 833.3,1030.1 835.8,1031.1 837.4,1023.3 838.4,1014.6 839.3,1006.8 841.1,996.5 842.6,1004.8 843.2,1012.6 844.0,1020.4 844.6,1029.2 845.6,1036.9 847.5,1037.9 849.5,1029.2 851.8,1022.3 857.6,1018.5 863.4,1024.3 866.9,1031.5 869.5,1024.3 870.8,1016.5 872.4,1007.8 874.3,1011.3 875.7,1018.5 877.1,1027.2 880.0,1034.0 883.5,1040.4 890.3,1036.9 895.5,1034.0 897.5,1025.3 899.0,1017.5 901.6,1026.2 902.9,1035.0 904.9,1041.8 911.7,1039.3 919.1,1043.7 922.4,1039.8 923.7,1031.1 924.3,1023.3 926.3,1014.0 929.2,1022.3 931.1,1030.1 932.0,1028.8 933.6,1020.4 935.5,1012.0 937.2,1004.8 938.4,1013.2 939.4,1021.4 940.2,1029.2 941.3,1036.9 943.1,1040.4 944.2,1032.1 945.2,1023.7 946.2,1016.5 947.6,1008.7 949.5,1017.5 951.4,1025.3 953.8,1025.3 954.9,1017.5 956.3,1008.7 957.7,1001.0 959.2,999.0 960.8,1007.4 961.7,1015.5 963.5,1023.3 969.9,1025.3 974.8,1021.8 978.7,1029.2 984.5,1034.0 988.4,1026.2 994.2,1023.3 999.1,1017.9 1003.6,1011.7 1006.9,1007.4 1008.4,1015.2 1009.8,1023.3 1011.3,1031.1 1013.7,1029.2 1014.6,1021.4 1016.0,1013.2 1017.9,1016.5 1019.9,1024.3 1021.4,1032.7 1026.3,1033.4 1032.1,1037.9 1038.5,1036.0 1040.5,1028.2 1041.3,1019.4 1041.9,1011.3 1043.8,1002.3 1045.7,1009.7 1048.3,1017.9 1050.6,1024.9 1052.5,1033.4 1057.4,1039.8 1061.3,1040.8 1066.2,1035.4 1071.6,1037.9 1074.9,1029.5 1078.8,1034.6 1083.3,1038.9 1087.2,1032.1 1088.5,1024.3 1089.9,1016.5 1092.4,1009.7 1098.2,1013.2 1099.2,1021.4 1100.8,1029.5 1102.1,1037.3 1103.5,1034.0 1104.5,1026.2 1105.6,1017.9 1108.0,1011.7 1110.5,1019.4 1112.8,1027.2 1118.3,1021.8 1122.5,1013.6 1126.4,1022.9 1129.3,1029.5 1132.3,1021.4 1134.6,1015.2 1140.0,1010.7 1143.5,1018.5 1146.8,1013.6 1148.8,1005.8 1151.3,1002.3 1153.3,1010.7 1154.6,1019.0 1157.5,1025.3 1161.0,1033.0 1167.3,1032.7 1172.1,1026.2 1178.5,1025.3 1183.2,1028.8 1187.1,1021.8 1191.6,1014.6 1195.8,1017.1 1199.3,1021.4 1202.3,1013.2 1204.8,1005.8 1206.5,997.7 1207.1,989.9 1208.5,981.5 1210.4,984.4 1211.0,992.2 1211.6,1000.0 1212.4,1008.2 1213.3,1016.5 1214.9,1021.0 1217.8,1012.6 1223.3,1007.4 1227.5,1011.7 1230.5,1018.5 1234.3,1025.3 1238.2,1020.4 1241.5,1016.5 1244.1,1025.3 1245.4,1033.4 1248.9,1028.2 1250.9,1020.0 1253.8,1025.3 1256.7,1032.7 1259.0,1025.3 1260.6,1017.1 1262.9,1012.6 1264.9,1020.4 1266.4,1029.2 1269.3,1027.2 1270.7,1019.0 1272.3,1010.7 1276.5,1012.6 1281.0,1019.0 1283.5,1026.2 1287.4,1034.0 1290.7,1030.1 1292.1,1021.8 1294.0,1014.0 1298.5,1020.4 1302.4,1017.5 1306.3,1013.2 1313.1,1019.0 1317.9,1019.4 1319.3,1011.7 1320.9,1002.9 1323.8,1006.8 1325.1,1015.5 1328.6,1022.9 1334.1,1027.2 1335.4,1035.0 1337.8,1042.8 1339.7,1036.9 1340.7,1029.2 1341.3,1020.4 1342.3,1012.6 1346.1,1005.8 1348.0,1001.9 1349.9,1009.7 1350.9,1018.5 1351.9,1026.2 1352.9,1034.0 1354.4,1041.8 1356.7,1034.6 1359.1,1027.2 1365.9,1028.2 1369.8,1035.0 1376.2,1039.3 1380.1,1032.1 1386.5,1035.4 1393.7,1037.9 1397.2,1042.8 1398.9,1035.0 1400.1,1026.2 1400.9,1018.5 1403.4,1017.5 1404.8,1025.3 1405.9,1033.4 1410.2,1039.8 1416.1,1037.3 1419.6,1030.1 1420.5,1022.3 1421.3,1014.0 1421.9,1005.8 1422.5,997.7 1423.8,990.3 1425.2,997.1 1426.2,1004.8 1426.7,1013.2 1427.1,1021.4 1427.7,1029.2 1428.7,1037.3 1430.6,1029.2 1432.0,1021.4 1434.5,1014.0 1437.0,1021.8 1438.4,1030.1 1443.3,1036.0 1448.1,1030.7 1452.0,1024.3 1453.6,1016.5 1454.5,1007.4 1457.3,1010.7 1458.8,1018.5 1460.8,1027.2 1467.6,1026.8 1474.4,1028.2 1480.8,1022.9 1485.1,1028.2 1489.5,1034.6 1492.9,1040.8 1495.4,1033.4 1498.1,1026.2 1500.6,1018.5 1501.6,1009.7 1503.2,1002.3 1505.1,1009.7 1506.5,1018.5 1507.4,1026.2 1508.4,1033.4 1512.9,1037.3 1518.1,1043.7 1522.0,1039.8 1526.5,1034.0 1528.2,1025.3 1529.8,1017.5 1533.1,1022.3 1537.6,1028.8 1543.4,1034.0 1549.8,1036.0 1554.5,1029.2 1559.5,1028.2 1565.8,1033.0 1568.7,1026.2 1569.7,1018.5 1570.2,1010.7 1570.6,1001.9 1571.0,993.8 1571.6,985.4 1573.0,977.6 1574.5,985.4 1575.1,993.8 1575.9,1001.9 1576.5,1010.1 1577.0,1018.5 1579.0,1025.3 1584.2,1031.5 1587.2,1038.9 1590.1,1041.8 1592.0,1033.4 1593.6,1025.3 1596.5,1031.1 1598.8,1038.9 1604.6,1035.0 1608.5,1028.2 1612.4,1028.2 1617.3,1033.0 1622.1,1029.5 1623.7,1021.4 1624.7,1013.2 1626.4,1007.8 1628.0,1016.5 1629.3,1024.3 1630.5,1032.7 1631.5,1039.8 1633.8,1036.0 1635.2,1028.2 1639.1,1024.3 1642.6,1029.2 1643.9,1021.4 1644.7,1013.2 1645.5,1004.8 1646.1,997.1 1647.4,989.3 1649.4,981.5 1650.3,973.2 1651.3,965.0 1652.7,958.2 1654.2,965.0 1654.8,973.2 1655.6,981.5 1656.2,990.3 1656.6,998.4 1657.1,1006.8 1657.7,1014.0 1660.1,1010.7 1661.0,1002.9 1662.0,994.5 1664.0,986.4 1665.3,994.2 1665.9,1002.3 1666.5,1010.7 1666.9,1019.0 1667.8,1027.2 1672.7,1025.3 1676.6,1029.2 1680.5,1034.0 1682.4,1025.3 1687.3,1019.8 1694.5,1017.5 1700.9,1021.0 1706.3,1015.5 1708.7,1023.3 1710.6,1030.7 1712.2,1025.3 1713.1,1017.1 1713.9,1008.7 1714.5,1001.0 1715.1,992.6 1716.1,984.4 1717.4,970.8 1718.4,979.6 1719.0,988.3 1719.8,996.5 1720.3,1004.8 1720.9,1012.6 1721.7,1019.8 1728.1,1021.8 1731.0,1029.2 1734.9,1029.5 1737.0,1023.3 1742.8,1030.1 1748.7,1033.4 1749.6,1025.3 1750.2,1016.5 1750.6,1007.8 1751.0,999.0 1751.4,990.3 1751.8,981.5 1752.2,972.8 1752.6,964.0 1752.9,955.3 1753.5,946.5 1754.5,937.8 1755.5,946.5 1756.1,955.3 1756.4,964.0 1756.8,972.8 1757.2,981.5 1757.6,990.3 1758.4,998.0 1760.3,1005.8 1762.7,998.0 1766.2,990.3 1769.7,981.5 1771.6,986.4 1772.4,995.1 1773.0,1003.9 1773.6,1011.7 1774.3,1019.4 1775.3,1026.2 1776.9,1018.5 1777.4,1009.7 1778.0,1001.0 1778.8,992.2 1779.6,984.4 1780.7,978.6 1782.1,985.4 1782.9,994.2 1783.7,1001.9 1784.4,1009.7 1785.6,1016.5 1791.4,1021.0 1797.3,1014.6 1798.8,1006.8 1799.8,998.0 1800.8,990.3 1801.7,981.5 1802.5,972.8 1803.1,964.0 1803.5,955.3 1803.9,946.5 1804.3,937.8 1804.7,920.3 1805.1,902.8 1805.4,885.3 1805.8,867.8 1806.2,850.3 1806.6,841.5 1807.4,831.8 1808.2,841.5 1808.6,850.3 1808.9,859.0 1809.3,876.5 1809.7,894.0 1810.1,911.5 1810.5,929.0 1810.9,946.5 1811.3,964.0 1811.9,981.5 1812.4,990.3 1813.2,998.0 1814.8,1004.8 1816.3,1012.6 1819.6,1010.7 1821.0,1002.9 1822.0,995.1 1823.5,987.4 1824.9,995.1 1825.5,1002.9 1826.0,1010.7 1826.4,1018.5 1827.4,1026.2 1830.7,1030.1 1836.2,1025.7 1843.0,1023.7 1847.4,1023.7 1850.7,1030.1 1855.6,1026.2 1858.5,1018.5 1862.4,1011.7 1866.3,1006.8 1868.2,1014.6 1869.8,1023.3 1871.2,1030.7 1873.1,1023.3 1874.7,1016.5 1877.4,1012.0 1879.3,1020.4 1880.9,1028.8 1883.2,1033.0 1884.8,1025.3 1886.7,1016.5 1891.6,1019.4 1895.5,1026.8 1900.3,1033.0 1904.2,1028.2 1906.2,1019.4 1908.5,1012.6 1911.0,1004.8 1913.0,996.1 1915.9,998.4 1916.8,1006.8 1917.8,1015.2 1918.8,1022.9 1921.3,1018.5 1923.3,1009.7 1926.0,1002.9 1927.5,994.2 1929.1,985.4 1932.0,990.3 1933.4,998.4 1934.3,1006.8 1937.3,1013.6 1938.8,1021.8 1943.1,1021.8 1946.6,1015.5 1950.9,1023.3 1956.7,1019.4 1960.6,1027.2 1963.5,1024.3 1966.0,1016.5 1970.3,1017.9 1975.2,1024.3 1980.4,1029.2 1984.9,1024.3 1987.8,1015.9 1990.7,1021.4 1992.1,1030.1 1995.0,1034.0 1996.6,1026.2 1997.5,1017.9 1998.5,1009.7 2002.4,1003.5 2005.9,1001.9 2007.3,1010.7 2007.8,1019.0 2009.2,1027.2 2012.1,1027.2 2013.5,1018.5 2015.4,1011.7 2017.4,1019.0 2018.9,1027.2 2022.8,1030.7 2027.7,1024.3 2029.6,1016.5 2032.5,1015.5 2034.5,1023.7 2038.4,1030.1 2044.2,1031.5 2045.2,1023.3 2048.1,1017.5 2050.4,1025.3 2053.0,1033.0" fill="none" stroke="#b4f594" stroke-width="2.8" stroke-dasharray="3.5 4.5" stroke-linejoin="round"/><path d="M51 1065.4H2120" stroke="#9aa1a7" stroke-width="1.8" fill="none"/></svg>
<span class="t" style="left:1937.56px;top:772.62px;font-size:24.72px;font-weight:400;color:#33434c;transform:scaleX(0.9717)">16.4M Results</span>
<span class="t" style="left:64.48px;top:833.03px;font-size:15.81px;font-weight:400;color:#5f6d77;transform:scaleX(0.9486)">85K</span>
<span class="t" style="left:64.41px;top:879.73px;font-size:15.81px;font-weight:400;color:#5f6d77;transform:scaleX(0.9511)">68K</span>
<span class="t" style="left:64.37px;top:926.53px;font-size:15.81px;font-weight:400;color:#5f6d77;transform:scaleX(0.9524)">51K</span>
<span class="t" style="left:64.45px;top:974.33px;font-size:15.81px;font-weight:400;color:#5f6d77;transform:scaleX(0.9496)">34K</span>
<span class="t" style="left:65.17px;top:1021.13px;font-size:15.81px;font-weight:400;color:#5f6d77;transform:scaleX(0.9234)">17K</span>
<span class="t" style="left:2066.62px;top:833.03px;font-size:15.81px;font-weight:400;color:#5f6d77;transform:scaleX(1.0188)">5M</span>
<span class="t" style="left:2066.33px;top:879.73px;font-size:15.81px;font-weight:400;color:#5f6d77;transform:scaleX(1.0329)">4M</span>
<span class="t" style="left:2066.70px;top:926.53px;font-size:15.81px;font-weight:400;color:#5f6d77;transform:scaleX(1.0147)">3M</span>
<span class="t" style="left:2066.69px;top:974.33px;font-size:15.81px;font-weight:400;color:#5f6d77;transform:scaleX(1.0152)">2M</span>
<span class="t" style="left:2067.51px;top:1021.13px;font-size:15.81px;font-weight:400;color:#5f6d77;transform:scaleX(0.9756)">1M</span>
<span class="t" style="left:65.65px;top:1071.03px;font-size:15.81px;font-weight:400;color:#5f6d77;transform:scaleX(0.9260)">31 Mar 2025</span>
<span class="t" style="left:179.09px;top:1071.03px;font-size:15.81px;font-weight:400;color:#5f6d77;transform:scaleX(0.9260)">21 Apr 2025</span>
<span class="t" style="left:287.93px;top:1071.03px;font-size:15.81px;font-weight:400;color:#5f6d77;transform:scaleX(0.9260)">12 May 2025</span>
<span class="t" style="left:405.95px;top:1071.03px;font-size:15.81px;font-weight:400;color:#5f6d77;transform:scaleX(0.9260)">2 Jun 2025</span>
<span class="t" style="left:513.71px;top:1071.03px;font-size:15.81px;font-weight:400;color:#5f6d77;transform:scaleX(0.9260)">23 Jun 2025</span>
<span class="t" style="left:627.75px;top:1071.03px;font-size:15.81px;font-weight:400;color:#5f6d77;transform:scaleX(0.9260)">14 Jul 2025</span>
<span class="t" style="left:740.73px;top:1071.03px;font-size:15.81px;font-weight:400;color:#5f6d77;transform:scaleX(0.9260)">4 Aug 2025</span>
<span class="t" style="left:848.33px;top:1071.03px;font-size:15.81px;font-weight:400;color:#5f6d77;transform:scaleX(0.9260)">25 Aug 2025</span>
<span class="t" style="left:959.61px;top:1071.03px;font-size:15.81px;font-weight:400;color:#5f6d77;transform:scaleX(0.9260)">15 Sep 2025</span>
<span class="t" style="left:1077.27px;top:1071.03px;font-size:15.81px;font-weight:400;color:#5f6d77;transform:scaleX(0.9260)">6 Oct 2025</span>
<span class="t" style="left:1185.04px;top:1071.03px;font-size:15.81px;font-weight:400;color:#5f6d77;transform:scaleX(0.9260)">27 Oct 2025</span>
<span class="t" style="left:1295.04px;top:1071.03px;font-size:15.81px;font-weight:400;color:#5f6d77;transform:scaleX(0.9260)">17 Nov 2025</span>
<span class="t" style="left:1411.11px;top:1071.03px;font-size:15.81px;font-weight:400;color:#5f6d77;transform:scaleX(0.9260)">8 Dec 2025</span>
<span class="t" style="left:1518.87px;top:1071.03px;font-size:15.81px;font-weight:400;color:#5f6d77;transform:scaleX(0.9260)">29 Dec 2025</span>
<span class="t" style="left:1631.64px;top:1071.03px;font-size:15.81px;font-weight:400;color:#5f6d77;transform:scaleX(0.9260)">19 Jan 2026</span>
<span class="t" style="left:1746.90px;top:1071.03px;font-size:15.81px;font-weight:400;color:#5f6d77;transform:scaleX(0.9260)">9 Feb 2026</span>
<span class="t" style="left:1858.70px;top:1071.03px;font-size:15.81px;font-weight:400;color:#5f6d77;transform:scaleX(0.9260)">2 Mar 2026</span>
<span class="t" style="left:1966.46px;top:1071.03px;font-size:15.81px;font-weight:400;color:#5f6d77;transform:scaleX(0.9260)">23 Mar 2026</span>
<span class="t" style="left:50.16px;top:1132.01px;font-size:16.48px;font-weight:700;color:#33434c;transform:scaleX(0.9246)">Results</span>
<div class="abs" style="left:55px;top:1177.4px;width:10.2px;height:9.6px;background:#f8d890"></div>
<span class="t" style="left:68.74px;top:1173.46px;font-size:17.51px;font-weight:400;color:#36454e;transform:scaleX(1.0212)">Chips / potato chips / crisps</span>
<span class="t" style="left:2029.16px;top:1132.01px;font-size:16.48px;font-weight:700;color:#33434c;transform:scaleX(0.9220)">Engagement</span>
<div class="abs" style="left:1868.0px;top:1178.4px;width:8px;height:8.4px;background:#b4f594"></div>
<div class="abs" style="left:1879.1px;top:1178.4px;width:8px;height:8.4px;background:#b4f594"></div>
<div class="abs" style="left:1890.2px;top:1178.4px;width:8px;height:8.4px;background:#b4f594"></div>
<span class="t" style="left:1902.14px;top:1173.46px;font-size:17.51px;font-weight:400;color:#36454e;transform:scaleX(1.0212)">Chips / potato chips / crisps</span>
</body></html>
